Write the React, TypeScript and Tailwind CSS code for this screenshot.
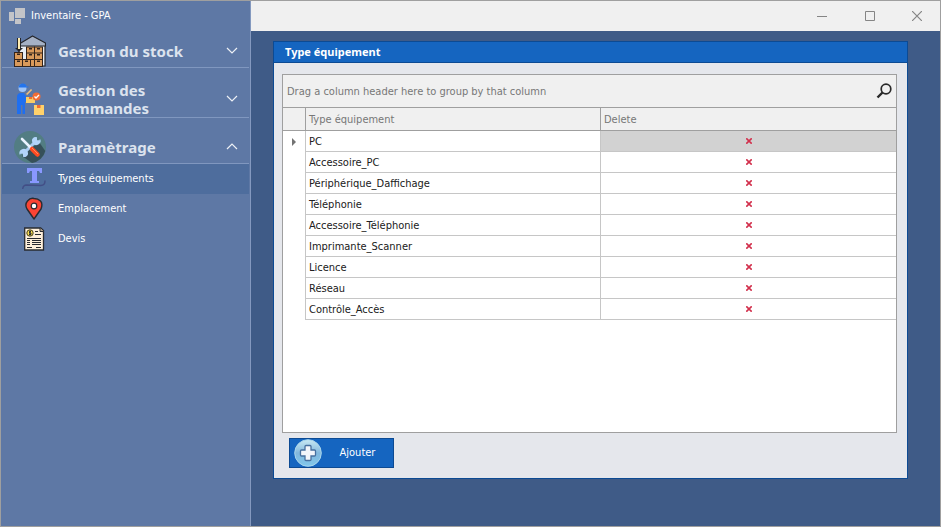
import React from "react";

const rows = [
  "PC",
  "Accessoire_PC",
  "Périphérique_Daffichage",
  "Téléphonie",
  "Accessoire_Téléphonie",
  "Imprimante_Scanner",
  "Licence",
  "Réseau",
  "Contrôle_Accès",
];

function AppIcon() {
  return (
    <svg width="16" height="16" viewBox="0 0 16 16" fill="#c3c4c8" aria-hidden="true">
      <rect x="0" y="4" width="5" height="9" />
      <rect x="6" y="0" width="10" height="10" />
      <rect x="6" y="11" width="6" height="5" />
    </svg>
  );
}

function Crate({ x, y }: { x: number; y: number }) {
  return (
    <g>
      <rect x={x} y={y} width="8" height="7" fill="#d99a5b" stroke="#33241c" strokeWidth="1" />
      <path d={`M${x + 2.5} ${y + 1}h3v1.5h-3z`} fill="#33241c" />
    </g>
  );
}

function WarehouseIcon() {
  return (
    <svg width="32" height="32" viewBox="0 0 32 32" aria-hidden="true">
      <path d="M5 11 18.500 1.500 31 9v22H5z" fill="#e8edf3" stroke="#25262b" strokeWidth="1.200" />
      <path d="M6 8.500 18.500 1 31.500 8v3H6z" fill="#a5b1c5" stroke="#25262b" strokeWidth="1.200" strokeLinejoin="round" />
      <Crate x={12.5} y={12} />
      <Crate x={20.5} y={12} />
      <Crate x={12.5} y={18} />
      <Crate x={20.5} y={18} />
      <Crate x={0.5} y={17.5} />
      <Crate x={0.5} y={24.5} />
      <Crate x={20.5} y={24.5} />
      <Crate x={8.5} y={24.5} />
      <path d="M16.500 24.500h4v7h-4z" fill="#d99a5b" stroke="#33241c" />
      <path d="M3 3h4v10h2l-4 4-4-4h2z" fill="#25262b" />
      <path d="M4 3h2v11H4z" fill="#fdebb0" />
    </svg>
  );
}

function DeliveryIcon() {
  return (
    <svg width="32" height="32" viewBox="0 0 32 32" aria-hidden="true">
      <path d="M3 14q0-4 4-4h3l3 5 4-1v3l-6 2v12H8.500v-9H7v9H3z" fill="#1f6ff0" />
      <circle cx="8.500" cy="5" r="4" fill="#9fc4f7" />
      <path d="M4.500 4q1-4 5-3.500 3 .5 3 3h2v1H4.500z" fill="#2474ec" />
      <path d="m12 11 5-5 1.200 1-5 5z" fill="#efbd7b" />
      <path d="M12 14h9v6h-9z" fill="#f7cc67" />
      <path d="M15 14h3v2h-3z" fill="#f26f32" />
      <circle cx="22.500" cy="13.500" r="4" fill="#f36d36" />
      <path d="m20.500 13.500 1.500 1.500 3-3" fill="none" stroke="#fff" strokeWidth="1.300" />
      <path d="M20 22h10v10H20z" fill="#ffd16b" />
      <path d="M23 22h3.500v3H23z" fill="#ee6b35" />
    </svg>
  );
}

function ToolsIcon() {
  return (
    <svg width="32" height="32" viewBox="0 0 32 32" aria-hidden="true">
      <circle cx="16" cy="16" r="16" fill="#527d83" />
      <path d="m25 11 6.300 9A16 16 0 0 1 18 31.900L8 25z" fill="#365059" />
      <path d="m10 22 12-12" stroke="#a9cdf4" strokeWidth="3" />
      <path d="M23 6.300v3l2.500 0 .5-1.500a4.200 4.200 0 1 1-6-1.500q1.500-.7 3 0zM9 25.700v-3H6.500L6 24.200a4.200 4.200 0 1 1 6 1.500q-1.500.7-3 0z" fill="#b2d5fa" />
      <path d="m8 8 10 10" stroke="#e9f3ff" strokeWidth="2.600" strokeLinecap="round" />
      <path d="m18 18 5.500 5.500" stroke="#ff4b20" strokeWidth="4.500" strokeLinecap="round" />
      <path d="m18 17 6 6" stroke="#ff8b5e" strokeWidth="1" />
    </svg>
  );
}

function TypeIcon() {
  return (
    <svg width="24" height="24" viewBox="0 0 24 24" aria-hidden="true">
      <path d="M5 1h15v5h-2l-1-2h-2v10h2v2H8v-2h2V4H8L7 6H5z" fill="#8998ff" />
      <path d="M.7 22q.3-4 4-4l14 .5q4.500 0 4.300-5" fill="none" stroke="#424e86" strokeWidth="1.400" />
    </svg>
  );
}

function PinIcon() {
  return (
    <svg width="24" height="24" viewBox="0 0 24 24" aria-hidden="true">
      <path d="M12 22 5 12Q2.500 7.500 5.500 4T12 1.500q4 0 6.500 2.500T19 12z" fill="#fb4434" stroke="#292b31" strokeWidth="1.400" strokeLinejoin="round" />
      <circle cx="12" cy="9" r="2.800" fill="#fff" stroke="#292b31" strokeWidth="1.200" />
    </svg>
  );
}

function QuoteIcon() {
  return (
    <svg width="24" height="24" viewBox="0 0 24 24" aria-hidden="true">
      <path d="M2.700 1h16l2.800 2.500V23H2.700z" fill="#fff0db" stroke="#292b31" strokeWidth="1.300" />
      <path d="M18 1v3.500h3.500" fill="#b7a68c" stroke="#292b31" />
      <circle cx="8" cy="6" r="3.200" fill="#f8dc50" stroke="#4a431f" />
      <path d="M9 4.500H7.500V6H9v1.500H7M8 3.500v5M13 4.500h3M13 7.500h6M5 11.500h14M5 13.500h3M10 13.500h9M5 15.500h3M10 15.500h9M5 17.500h3M10 17.500h9M5 20.500h5M14 20.500h5" fill="none" stroke="#292b31" strokeWidth="1" />
    </svg>
  );
}

function Chevron({ up = false }: { up?: boolean }) {
  return (
    <svg className="mr-[11px] shrink-0" width="12" height="8" viewBox="0 0 12 8" fill="none" stroke="#eef1f6" strokeWidth="1.200" aria-hidden="true">
      <path d={up ? "m1 6 5-5 5 5" : "m1 1 5 5 5-5"} />
    </svg>
  );
}

function Group({ icon, title, open = false }: { icon: React.ReactNode; title: string; open?: boolean }) {
  return (
    <button
      type="button"
      aria-expanded={open}
      className="flex w-full items-center border-b border-[#8097bf] pl-3 text-left font-['Noto_Sans','DejaVu_Sans',sans-serif] text-[15px] leading-[18px] font-bold text-[#dce3ee]"
    >
      <span className="mr-3 shrink-0">{icon}</span>
      <span className="min-w-0 flex-1 pr-8">{title}</span>
      <Chevron up={open} />
    </button>
  );
}

function Item({ icon, title, selected = false }: { icon: React.ReactNode; title: string; selected?: boolean }) {
  return (
    <a
      href="#"
      aria-current={selected ? "page" : undefined}
      className={`flex h-[30px] items-center gap-3 pl-5 text-white ${selected ? "bg-[#4e6d9d]" : ""}`}
    >
      {icon}
      <span>{title}</span>
    </a>
  );
}

function Sidebar() {
  return (
    <nav className="w-[250px] shrink-0 border-r border-[#8499bf] bg-[#5e78a5] pr-px pl-px">
      <div className="flex h-[34px] items-center gap-[6px] pb-1 pl-[7px] text-white">
        <AppIcon />
        <h1>Inventaire - GPA</h1>
      </div>
      <div className="flex flex-col gap-[13px]">
        <Group icon={<WarehouseIcon />} title="Gestion du stock" />
        <Group icon={<DeliveryIcon />} title="Gestion des commandes" />
        <Group icon={<ToolsIcon />} title="Paramètrage" open />
      </div>
      <Item icon={<TypeIcon />} title="Types équipements" selected />
      <Item icon={<PinIcon />} title="Emplacement" />
      <Item icon={<QuoteIcon />} title="Devis" />
    </nav>
  );
}

function TitleBar() {
  return (
    <header className="flex h-[30px] shrink-0 items-center justify-end bg-[#f0f0f0] text-[#858585]">
      <button type="button" aria-label="Réduire" className="flex h-full w-12 items-center justify-center">
        <svg width="10" height="10" viewBox="0 0 10 10" stroke="currentColor"><path d="M0 5.500h10" /></svg>
      </button>
      <button type="button" aria-label="Agrandir" className="flex h-full w-12 items-center justify-center">
        <svg width="10" height="10" viewBox="0 0 10 10" fill="none" stroke="currentColor"><path d="M.5.500h9v9h-9z" /></svg>
      </button>
      <button type="button" aria-label="Fermer" className="flex h-full w-[46px] items-center justify-center">
        <svg width="10" height="10" viewBox="0 0 10 10" stroke="currentColor" strokeWidth="1.200"><path d="m0 0 10 10M10 0 0 10" /></svg>
      </button>
    </header>
  );
}

function EquipmentTable() {
  return (
    <table className="w-full table-fixed border-separate border-spacing-0">
      <colgroup>
        <col className="w-[23px]" />
        <col />
        <col />
      </colgroup>
      <thead>
        <tr className="h-[23px] bg-[#f0f0f0] text-left text-[#777]">
          <th className="border-r border-b border-[#9f9f9f]" />
          <th className="border-r border-b border-[#9f9f9f] px-[3px] pt-0.5 font-normal">Type équipement</th>
          <th className="border-b border-[#9f9f9f] px-[3px] pt-0.5 font-normal">Delete</th>
        </tr>
      </thead>
      <tbody>
        {rows.map((name, i) => (
          <tr key={name} className="h-[21px] text-[#202020]">
            <td className="border-r border-[#c6c6c6]">
              {i === 0 && (
                <svg className="ml-2" width="6" height="8" viewBox="0 0 6 8" fill="#737373" aria-hidden="true">
                  <path d="M1 0v8l4-4z" />
                </svg>
              )}
            </td>
            <td className="border-r border-b border-[#c6c6c6] px-[3px] pt-0.5">{name}</td>
            <td className={`border-b border-[#c6c6c6] ${i === 0 ? "bg-[#d2d2d2]" : ""}`}>
              <button type="button" aria-label={`Supprimer ${name}`} className="flex w-full justify-center">
                <svg width="6" height="6" viewBox="0 0 6 6" fill="none" stroke="#d2304c" strokeWidth="1.600" aria-hidden="true">
                  <path d="m.3.300 5.400 5.400M5.700.300.300 5.700" />
                </svg>
              </button>
            </td>
          </tr>
        ))}
      </tbody>
    </table>
  );
}

function SearchIcon() {
  return (
    <svg width="16" height="16" viewBox="0 0 16 16" fill="none" stroke="#292929" aria-hidden="true">
      <circle cx="10" cy="6" r="4.800" strokeWidth="1.700" />
      <path d="m6.500 9.500-5 5" strokeWidth="2.400" />
    </svg>
  );
}

function AddIcon() {
  return (
    <svg width="28" height="28" viewBox="0 0 28 28" aria-hidden="true">
      <defs>
        <linearGradient id="add-disc" x1="0" y1="0" x2="0" y2="1">
          <stop stopColor="#c8e9f3" />
          <stop offset=".5" stopColor="#82b8dd" />
          <stop offset="1" stopColor="#80c7eb" />
        </linearGradient>
      </defs>
      <circle cx="14" cy="14" r="13.300" fill="url(#add-disc)" stroke="#a9d5eb" />
      <path d="M12 6.500h4q1 0 1 1V11h3.500q1 0 1 1v4q0 1-1 1H17v3.500q0 1-1 1h-4q-1 0-1-1V17H7.500q-1 0-1-1v-4q0-1 1-1H11V7.500q0-1 1-1z" fill="#f2f5fa" stroke="#47709f" strokeWidth="1.300" />
    </svg>
  );
}

export default function App() {
  return (
    <div className="flex min-h-screen border border-[#9f9f9f] font-['DejaVu_Sans_Condensed','DejaVu_Sans',sans-serif] text-[11px] leading-[14px]">
      <Sidebar />
      <div className="flex min-w-0 flex-1 flex-col bg-[#3f5b87]">
        <TitleBar />
        <main className="flex flex-1 flex-col pt-[10px] pr-8 pb-[47px] pl-[22px]">
          <section className="flex flex-1 flex-col border border-[#0c4a93] bg-[#e5e7ec]">
            <h2 className="flex h-[21px] items-center border-b border-[#0c4a93] bg-[#1565c0] px-[11px] font-['Noto_Sans','DejaVu_Sans',sans-serif] font-bold text-white">
              Type équipement
            </h2>
            <div className="flex flex-1 flex-col items-start gap-[5px] pt-[11px] pr-[10px] pb-[10px] pl-2">
              <div className="w-full flex-1 border border-[#9f9f9f] bg-white">
                <div className="flex h-[33px] items-center justify-between border-b border-[#9f9f9f] bg-[#f0f0f0] pr-1 pl-1 text-[#777]">
                  <span className="pt-0.5">Drag a column header here to group by that column</span>
                  <button type="button" aria-label="Rechercher">
                    <SearchIcon />
                  </button>
                </div>
                <EquipmentTable />
              </div>
              <button type="button" className="ml-[7px] flex h-[30px] w-[105px] items-center border border-[#0c4a93] bg-[#1565c0] pl-1 text-white">
                <AddIcon />
                <span className="flex-1 text-center">Ajouter</span>
              </button>
            </div>
          </section>
        </main>
      </div>
    </div>
  );
}
